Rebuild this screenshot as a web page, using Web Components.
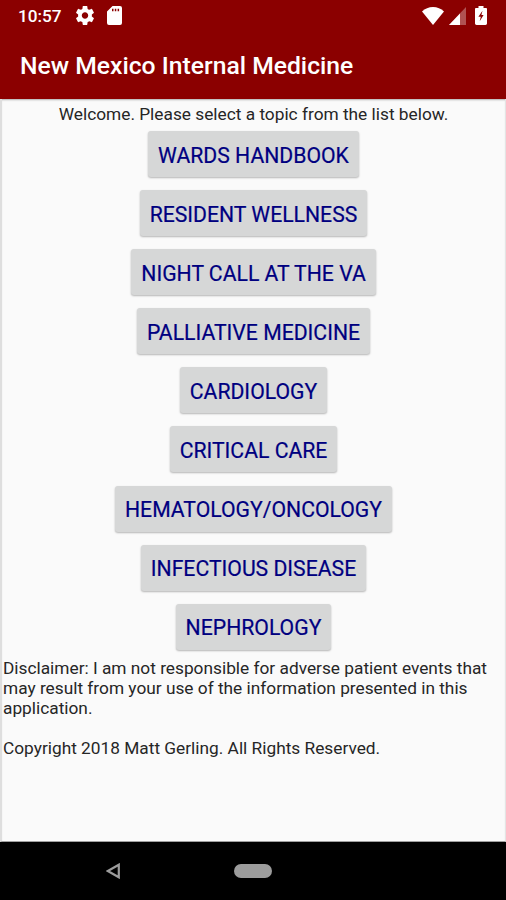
<!DOCTYPE html>
<html lang="en">
<head>
<meta charset="utf-8">
<title>New Mexico Internal Medicine</title>
<style>
    html, body {
        margin: 0;
        height: 100%;
        background: #000;
    }
    body {
        font-family: Roboto, "Liberation Sans", sans-serif;
        overflow: hidden;
    }
</style>
</head>
<body>
<app-screen>
    <status-bar slot="top" time="10:57"></status-bar>
    <app-bar slot="top">New Mexico Internal Medicine</app-bar>
    <topic-list intro="Welcome. Please select a topic from the list below.">
        <topic-button>WARDS HANDBOOK</topic-button>
        <topic-button>RESIDENT WELLNESS</topic-button>
        <topic-button>NIGHT CALL AT THE VA</topic-button>
        <topic-button>PALLIATIVE MEDICINE</topic-button>
        <topic-button>CARDIOLOGY</topic-button>
        <topic-button>CRITICAL CARE</topic-button>
        <topic-button>HEMATOLOGY/ONCOLOGY</topic-button>
        <topic-button>INFECTIOUS DISEASE</topic-button>
        <topic-button>NEPHROLOGY</topic-button>
    </topic-list>
    <app-note>Disclaimer: I am not responsible for adverse patient events that may result from your use of the information presented in this application.</app-note>
    <app-note>Copyright 2018 Matt Gerling. All Rights Reserved.</app-note>
    <nav-bar slot="bottom"></nav-bar>
</app-screen>

<script>
class AppScreen extends HTMLElement {
    constructor() {
        super();
        this.attachShadow({ mode: 'open' });
        this.shadowRoot.innerHTML = `
            <style>
                :host {
                    display: flex;
                    flex-direction: column;
                    width: 506px;
                    height: 900px;
                }
                header {
                    background: #8b0000;
                    height: 99px;
                    flex: none;
                }
                main {
                    flex: 1;
                    box-sizing: border-box;
                    background: #fafafa;
                    border-left: 2px solid #dedede;
                    border-right: 1px solid #e4e4e4;
                    border-bottom: 1px solid #a0a0a0;
                    box-shadow: inset 0 2px 2px -1px rgba(0, 0, 0, .3);
                }
            </style>
            <header><slot name="top"></slot></header>
            <main><slot></slot></main>
            <slot name="bottom"></slot>
        `;
    }
}

class StatusBar extends HTMLElement {
    constructor() {
        super();
        this.attachShadow({ mode: 'open' });
        this.shadowRoot.innerHTML = `
            <style>
                :host {
                    display: flex;
                    align-items: center;
                    box-sizing: border-box;
                    height: 31px;
                    padding: 0 19px 0 18px;
                    color: #fff;
                    font-size: 17.2px;
                    font-weight: 500;
                }
                .time { width: 58px; white-space: nowrap; }
                svg { display: block; fill: #fff; }
                .gear { margin-right: 13px; }
                .wifi { margin-left: auto; margin-right: 5px; }
                .cell { margin-right: 9px; }
            </style>
            <span class="time"></span>
            <svg class="gear" width="18" height="19" viewBox="2.2 2 19.6 20" preserveAspectRatio="none"><path d="M19.43 12.98c.04-.32.07-.64.07-.98s-.03-.66-.07-.98l2.11-1.65c.19-.15.24-.42.12-.64l-2-3.46c-.12-.22-.39-.3-.61-.22l-2.49 1c-.52-.4-1.08-.73-1.69-.98l-.38-2.65C14.46 2.18 14.25 2 14 2h-4c-.25 0-.46.18-.49.42l-.38 2.65c-.61.25-1.17.59-1.69.98l-2.49-1c-.23-.09-.49 0-.61.22l-2 3.46c-.13.22-.07.49.12.64l2.11 1.65c-.04.32-.07.65-.07.98s.03.66.07.98l-2.11 1.65c-.19.15-.24.42-.12.64l2 3.46c.12.22.39.3.61.22l2.49-1c.52.4 1.08.73 1.69.98l.38 2.65c.03.24.24.42.49.42h4c.25 0 .46-.18.49-.42l.38-2.65c.61-.25 1.17-.59 1.69-.98l2.49 1c.23.09.49 0 .61-.22l2-3.46c.12-.22.07-.49-.12-.64l-2.11-1.65zM12 15.5c-1.93 0-3.5-1.57-3.5-3.5s1.57-3.5 3.5-3.5 3.5 1.57 3.5 3.5-1.57 3.5-3.5 3.5z"/></svg>
            <svg width="15" height="19" viewBox="0 0 15 19"><path fill-rule="evenodd" d="M5.500 0H13q2 0 2 2v15q0 2-2 2H2q-2 0-2-2V5.500zM5 2.800v2.400h1.500V2.800zm2.800 0v2.400h1.500V2.800zm2.800 0v2.400h1.500V2.800z"/></svg>
            <svg class="wifi" width="22" height="18" viewBox="0 0 22 18"><path d="M11 18 0 4.600C3 1.500 6.800 0 11 0s8 1.500 11 4.600z"/></svg>
            <svg class="cell" width="17" height="18" viewBox="0 0 17 18"><path d="M17 0v18H0z" opacity=".32"/><path d="M11 6.400V18H0z"/></svg>
            <svg width="12" height="19" viewBox="0 0 12 20" preserveAspectRatio="none"><path fill-rule="evenodd" d="M3.500 0h5v2H11q1 0 1 1v15.500q0 1.500-1.500 1.500h-9Q0 20 0 18.500V3q0-1 1-1h2.500zM7.500 5 3.400 11.200h2.400L4.700 16 8.600 9.600H6.400z"/></svg>
        `;
    }

    connectedCallback() {
        this.shadowRoot.querySelector('.time').textContent = this.getAttribute('time');
    }
}

class AppBar extends HTMLElement {
    constructor() {
        super();
        this.attachShadow({ mode: 'open' });
        this.shadowRoot.innerHTML = `
            <style>
                :host {
                    display: flex;
                    align-items: center;
                    height: 68px;
                    padding-left: 20px;
                    color: #fff;
                    font-size: 24.7px;
                    font-weight: 500;
                    white-space: nowrap;
                }
            </style>
            <span><slot></slot></span>
        `;
    }
}

class TopicList extends HTMLElement {
    constructor() {
        super();
        this.attachShadow({ mode: 'open' });
        this.shadowRoot.innerHTML = `
            <style>
                :host {
                    display: flex;
                    flex-direction: column;
                    align-items: center;
                    padding-top: 5px;
                }
                p {
                    margin: 0 0 7px;
                    color: #262626;
                    font-size: 17.3px;
                    line-height: 20px;
                    white-space: nowrap;
                }
                .topics {
                    display: flex;
                    flex-direction: column;
                    align-items: center;
                    gap: 13.1px;
                }
            </style>
            <p></p>
            <div class="topics"><slot></slot></div>
        `;
    }

    connectedCallback() {
        this.shadowRoot.querySelector('p').textContent = this.getAttribute('intro');
    }
}

class TopicButton extends HTMLElement {
    constructor() {
        super();
        this.attachShadow({ mode: 'open' });
        this.shadowRoot.innerHTML = `
            <style>
                :host { display: block; }
                button {
                    display: block;
                    height: 46px;
                    padding: 2px 10px 0;
                    border: none;
                    border-radius: 3px;
                    background: #d6d7d7;
                    box-shadow: 0 1px 2px rgba(0, 0, 0, .28);
                    color: #000080;
                    font: 400 21.2px Roboto, "Liberation Sans", sans-serif;
                    -webkit-text-stroke: .2px #000080;
                    white-space: nowrap;
                }
            </style>
            <button><slot></slot></button>
        `;
    }
}

class AppNote extends HTMLElement {
    constructor() {
        super();
        this.attachShadow({ mode: 'open' });
        this.shadowRoot.innerHTML = `
            <style>
                :host {
                    display: block;
                    margin: 8px 12px 20px 1px;
                    color: #262626;
                    font-size: 17.3px;
                    line-height: 20px;
                }
                :host(:last-of-type) { margin-top: 0; }
            </style>
            <slot></slot>
        `;
    }
}

class NavBar extends HTMLElement {
    constructor() {
        super();
        this.attachShadow({ mode: 'open' });
        this.shadowRoot.innerHTML = `
            <style>
                :host {
                    display: grid;
                    grid-template-columns: 106px 128px 38px;
                    align-items: center;
                    flex: none;
                    height: 58px;
                    background: #000;
                }
                svg { grid-column: 2; display: block; }
                .home {
                    grid-column: 3;
                    height: 14px;
                    border-radius: 7px;
                    background: #9c9c9c;
                }
            </style>
            <svg width="14" height="16" viewBox="0 0 14 16"><path d="M12.800 1.700v12.600L1.800 8z" fill="none" stroke="#9c9c9c" stroke-width="2.200"/></svg>
            <div class="home"></div>
        `;
    }
}

customElements.define('app-screen', AppScreen);
customElements.define('status-bar', StatusBar);
customElements.define('app-bar', AppBar);
customElements.define('topic-list', TopicList);
customElements.define('topic-button', TopicButton);
customElements.define('app-note', AppNote);
customElements.define('nav-bar', NavBar);
</script>
</body>
</html>
